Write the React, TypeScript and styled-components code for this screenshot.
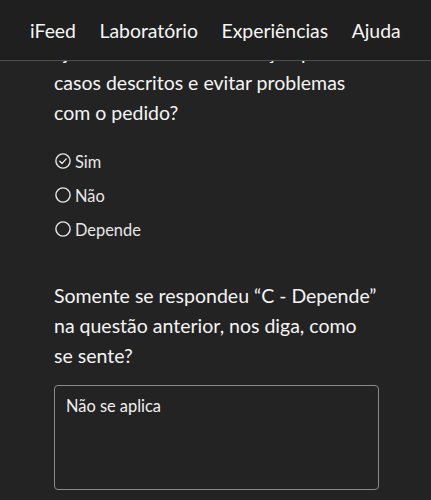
import React from "react";
import styled, { createGlobalStyle } from "styled-components";

const Global = createGlobalStyle`
  html, body { margin: 0; padding: 0; background: #232323; }
  body { font-family: "Lato", "Open Sans", sans-serif; color: #f2f2f2; -webkit-font-smoothing: antialiased; }
  * { box-sizing: border-box; }
`;

const Header = styled.header`
  position: fixed;
  top: 0;
  left: 0;
  right: 0;
  height: 61px;
  background: #1f1f1f;
  border-bottom: 1px solid #4d4d4d;
  display: flex;
  align-items: center;
  gap: 23.5px;
  padding-left: 30px;
  z-index: 2;
`;

const NavLink = styled.a`
  font-size: 19.4px;
  color: #f6f6f6;
  text-decoration: none;
  white-space: nowrap;
`;

const Main = styled.main`
  padding: 38px 0 20px 54px;
`;

const Question = styled.p<{ $top?: number }>`
  margin: ${(p) => p.$top ?? 0}px 0 0;
  font-size: 19.5px;
  line-height: 30px;
  white-space: nowrap;
  color: #f4f4f4;
`;

const Options = styled.div`
  margin-top: 16px;
  display: flex;
  flex-direction: column;
`;

const Option = styled.label`
  height: 34px;
  display: flex;
  align-items: center;
  gap: 4px;
  font-size: 16.4px;
  color: #e8e8e8;
  margin-left: 1px;
`;

const TextBox = styled.div`
  margin-top: 14px;
  width: 325px;
  height: 105px;
  border: 1px solid #8a8a8a;
  border-radius: 4px;
  padding: 9px 11px;
  font-size: 16.4px;
  line-height: 22px;
  color: #f0f0f0;
`;

const Radio = ({ checked }: { checked?: boolean }) => (
  <svg width="16" height="16" viewBox="0 0 16 16" fill="none">
    <circle cx="8" cy="8" r="7.1" stroke="#e8e8e8" strokeWidth="1.4" />
    {checked && (
      <path d="M4.8 8.2 L7.1 10.4 L11.2 5.9" stroke="#e8e8e8" strokeWidth="1.4" strokeLinecap="round" strokeLinejoin="round" />
    )}
  </svg>
);

export default function App() {
  return (
    <>
      <Global />
      <Header>
        <NavLink>iFeed</NavLink>
        <NavLink>Laboratório</NavLink>
        <NavLink>Experiências</NavLink>
        <NavLink>Ajuda</NavLink>
      </Header>
      <Main>
        <Question>
          ajudaram a dar mais atenção para os
          <br />
          casos descritos e evitar problemas
          <br />
          com o pedido?
        </Question>
        <Options>
          <Option><Radio checked />Sim</Option>
          <Option><Radio />Não</Option>
          <Option><Radio />Depende</Option>
        </Options>
        <Question $top={35}>
          Somente se respondeu “C - Depende”
          <br />
          na questão anterior, nos diga, como
          <br />
          se sente?
        </Question>
        <TextBox>Não se aplica</TextBox>
      </Main>
    </>
  );
}
